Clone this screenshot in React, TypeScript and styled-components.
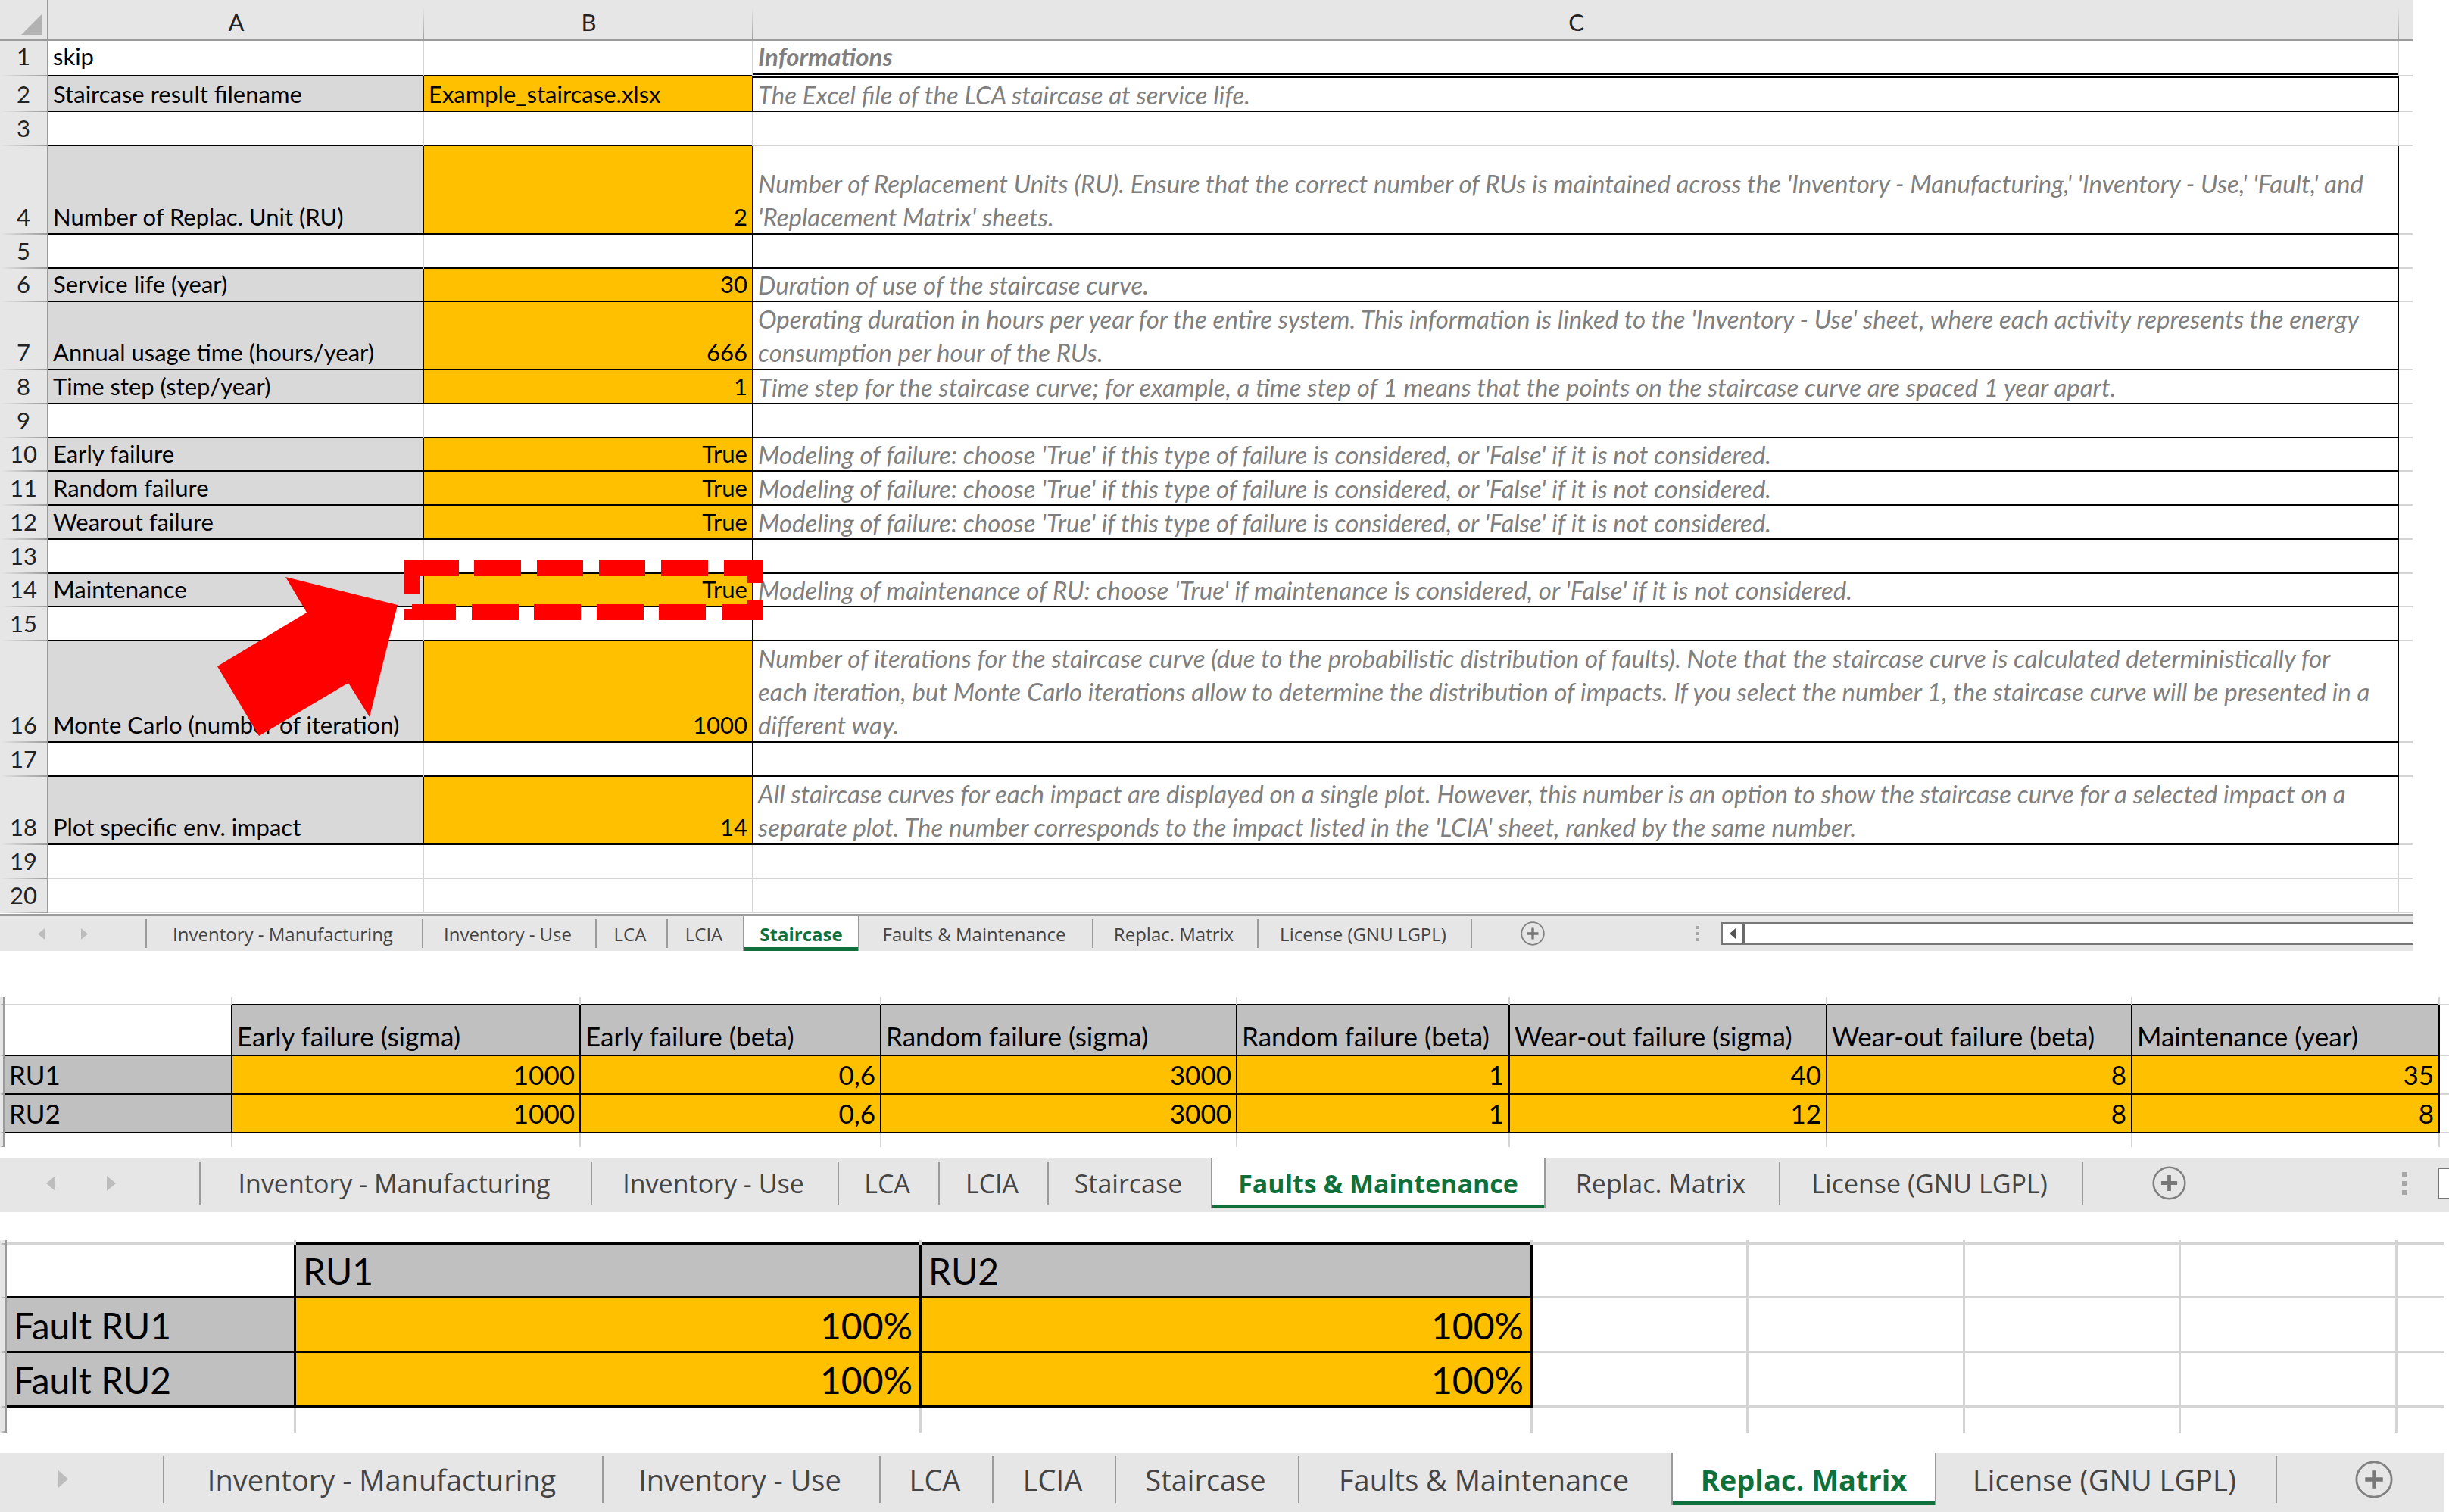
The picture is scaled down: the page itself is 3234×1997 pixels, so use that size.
import React from "react";
import styled, { createGlobalStyle } from "styled-components";

const ink = "#000000";
const gridline = "#d4d4d4";
const headLine = "#9b9b9b";
const chrome = "#e6e6e6";
const amber = "#ffc000";
const excelGreen = "#0f703b";

const GlobalStyle = createGlobalStyle`
  body {
    margin: 0;
    background: #ffffff;
    color: #000000;
    font-family: Lato, "Liberation Sans", sans-serif;
  }
  *, *::before, *::after { box-sizing: border-box; }
`;

const Page = styled.main`
  display: flex;
  flex-direction: column;
`;

const Sheet = styled.section<{ $top?: number; $right?: number }>`
  position: relative;
  margin-top: ${(p) => p.$top ?? 0}px;
  margin-right: ${(p) => p.$right ?? 0}px;
`;

const Table = styled.table<{ $font: number; $line: number; $pad: number; $foot?: number }>`
  width: 100%;
  table-layout: fixed;
  border-collapse: separate;
  border-spacing: 0;
  font-size: ${(p) => p.$font}px;
  line-height: ${(p) => p.$line}px;

  th,
  td {
    padding: 0 ${(p) => p.$pad}px ${(p) => p.$foot ?? 0}px;
  }
`;

const Col = styled.col<{ $w?: number }>`
  width: ${(p) => (p.$w ? `${p.$w}px` : "auto")};
`;

const Row = styled.tr<{ $h: number; $foot?: number }>`
  height: ${(p) => p.$h}px;

  ${(p) => p.$foot !== undefined && `&&& > * { padding-bottom: ${p.$foot}px; }`}
`;

type CellLook = {
  $fill?: string;
  $right?: string;
  $bottom?: string;
  $align?: string;
  $thick?: boolean;
};

const Cell = styled.td<CellLook>`
  vertical-align: bottom;
  white-space: nowrap;
  font-weight: 400;
  text-align: ${(p) => p.$align ?? "left"};
  background: ${(p) => p.$fill ?? "#ffffff"};
  border-right: ${(p) => (p.$thick ? 3 : 2)}px solid ${(p) => p.$right ?? gridline};
  box-shadow: inset 0 ${(p) => (p.$thick ? -3 : -2)}px ${(p) => p.$bottom ?? gridline};
`;

const NoteCell = styled(Cell)<{ $title?: boolean; $ruled?: boolean }>`
  color: #7f7f7f;
  font-size: 33px;
  font-style: italic;
  font-weight: ${(p) => (p.$title ? 700 : 400)};
  border-top: ${(p) => (p.$ruled ? `2px solid ${ink}` : "0")};
  ${(p) =>
    p.$title &&
    `box-shadow: inset 0 -2px #ffffff, inset 0 -4px ${ink};`}

  && {
    padding-bottom: 2px;
  }
`;

const Line = styled.span<{ $wrapped: boolean }>`
  display: block;
  line-height: ${(p) => (p.$wrapped ? 44 : 41)}px;
`;

const Stub = styled(Cell)`
  border-right: 0;
`;

const ColumnHead = styled.th`
  vertical-align: bottom;
  font-weight: 400;
  color: #222222;
  background:
    linear-gradient(${headLine}, ${headLine}) bottom / 100% 2px no-repeat,
    linear-gradient(${chrome} 18%, ${headLine}) right / 2px 100% no-repeat,
    ${chrome};
`;

const RowHead = styled.th`
  vertical-align: bottom;
  font-weight: 400;
  text-align: center;
  color: #222222;
  border-right: 2px solid ${headLine};
  background:
    linear-gradient(to right, ${chrome}, ${headLine}) bottom / 100% 2px no-repeat,
    ${chrome};

  && {
    padding-left: 0;
    padding-right: 0;
  }
`;

const EndHead = styled(ColumnHead)`
  background:
    linear-gradient(${headLine}, ${headLine}) bottom / 100% 2px no-repeat,
    ${chrome};
`;

const Corner = styled(RowHead)`
  text-align: right;
  background:
    linear-gradient(${headLine}, ${headLine}) bottom / 100% 2px no-repeat,
    ${chrome};

  svg {
    display: block;
    margin: 0 6px 4px auto;
  }
`;

const Markup = styled.svg`
  position: absolute;
  top: 740px;
  left: 287px;
`;

/* ---------- tab bar ---------- */

const Bar = styled.nav<{
  $h: number;
  $font: number;
  $top?: number;
  $right?: number;
  $foot?: number;
  $ruled?: boolean;
}>`
  display: flex;
  align-items: center;
  height: ${(p) => p.$h}px;
  margin-top: ${(p) => p.$top ?? 0}px;
  margin-right: ${(p) => p.$right ?? 0}px;
  padding-bottom: ${(p) => p.$foot ?? 0}px;
  overflow: hidden;
  background: ${chrome};
  border-top: ${(p) => (p.$ruled ? `3px solid ${headLine}` : "0")};
  font-family: "Open Sans", "Noto Sans", sans-serif;
  font-size: ${(p) => p.$font}px;
`;

const BareButton = styled.button`
  display: flex;
  align-items: center;
  justify-content: center;
  flex: none;
  margin: 0;
  padding: 0;
  border: 0;
  background: none;
  font: inherit;
  color: inherit;
  cursor: pointer;
`;

const Lead = styled.div<{ $w: number; $h: number; $pad: number; $gap: number }>`
  display: flex;
  align-items: center;
  flex: none;
  width: ${(p) => p.$w}px;
  height: ${(p) => p.$h}px;
  padding-left: ${(p) => p.$pad}px;
  gap: ${(p) => p.$gap}px;
  border-right: 2px solid ${headLine};
`;

const Tab = styled(BareButton)<{ $w: number; $h: number; $last?: boolean; $on?: boolean }>`
  width: ${(p) => p.$w}px;
  height: ${(p) => p.$h}px;
  padding-right: 4px;
  color: #444444;
  white-space: nowrap;
  border-right: ${(p) => (p.$last ? "0" : `2px solid ${headLine}`)};
  ${(p) =>
    p.$on &&
    `
    align-self: stretch;
    height: auto;
    padding-right: 0;
    color: ${excelGreen};
    font-weight: 700;
    background: #ffffff;
    border-left: 2px solid ${headLine};
    box-shadow: inset 0 -5px ${excelGreen};
  `}
`;

const AddButton = styled(BareButton)<{ $gap: number }>`
  margin-left: ${(p) => p.$gap}px;
`;

const Dots = styled.span<{ $size: number }>`
  display: flex;
  flex-direction: column;
  gap: ${(p) => p.$size}px;
  margin-left: auto;

  i {
    width: ${(p) => p.$size}px;
    height: ${(p) => p.$size}px;
    background: #a6a6a6;
  }
`;

const Scroll = styled.div<{ $w: string; $h: number; $gap: number }>`
  display: flex;
  flex: none;
  overflow: hidden;
  width: ${(p) => p.$w};
  height: ${(p) => p.$h}px;
  margin-left: ${(p) => p.$gap}px;
  background: #ffffff;
  border: 2px solid #777777;
  border-right: 0;
`;

const ScrollArrow = styled(BareButton)<{ $w: number }>`
  width: ${(p) => p.$w}px;
  border-right: 3px solid #6b6b6b;
`;

const Arrow = ({ dir, w, h, color = "#bdbdbd" }: { dir: "left" | "right"; w: number; h: number; color?: string }) => (
  <svg width={w} height={h} viewBox="0 0 10 16" preserveAspectRatio="none" aria-hidden="true">
    <path d={dir === "left" ? "M10 0V16L0 8Z" : "M0 0V16L10 8Z"} fill={color} />
  </svg>
);

const Plus = ({ size }: { size: number }) => (
  <svg width={size} height={size} viewBox="0 0 32 32" aria-hidden="true">
    <circle cx="16" cy="16" r="14.8" fill="none" stroke="#808080" strokeWidth="1.8" />
    <path d="M16 8.5V23.5M8.5 16H23.5" stroke="#777777" strokeWidth="3.4" />
  </svg>
);

const names = [
  "Inventory - Manufacturing",
  "Inventory - Use",
  "LCA",
  "LCIA",
  "Staircase",
  "Faults & Maintenance",
  "Replac. Matrix",
  "License (GNU LGPL)",
];

const Tabs = ({ widths, active, height }: { widths: number[]; active: number; height: number }) => (
  <>
    {names.map((name, i) => (
      <Tab
        key={name}
        type="button"
        $w={widths[i]}
        $h={height}
        $on={i === active}
        $last={i === active - 1}
        aria-current={i === active ? "page" : undefined}
      >
        {name}
      </Tab>
    ))}
  </>
);

/* ---------- staircase sheet ---------- */

type Setting = {
  h: number;
  label?: string;
  value?: string;
  left?: boolean;
  note?: string[];
};

const failureNote =
  "Modeling of failure: choose 'True' if this type of failure is considered, or 'False' if it is not considered.";

const settings: Setting[] = [
  { h: 47, label: "skip", note: ["Informations"] },
  {
    h: 47,
    label: "Staircase result filename",
    value: "Example_staircase.xlsx",
    left: true,
    note: ["The Excel file of the LCA staircase at service life."],
  },
  { h: 45 },
  {
    h: 117,
    label: "Number of Replac. Unit (RU)",
    value: "2",
    note: [
      "Number of Replacement Units (RU). Ensure that the correct number of RUs is maintained across the 'Inventory - Manufacturing,' 'Inventory - Use,' 'Fault,' and",
      "'Replacement Matrix' sheets.",
    ],
  },
  { h: 45 },
  { h: 44, label: "Service life (year)", value: "30", note: ["Duration of use of the staircase curve."] },
  {
    h: 90,
    label: "Annual usage time (hours/year)",
    value: "666",
    note: [
      "Operating duration in hours per year for the entire system. This information is linked to the 'Inventory - Use' sheet, where each activity represents the energy",
      "consumption per hour of the RUs.",
    ],
  },
  {
    h: 45,
    label: "Time step (step/year)",
    value: "1",
    note: [
      "Time step for the staircase curve; for example, a time step of 1 means that the points on the staircase curve are spaced 1 year apart.",
    ],
  },
  { h: 45 },
  { h: 44, label: "Early failure", value: "True", note: [failureNote] },
  { h: 45, label: "Random failure", value: "True", note: [failureNote] },
  { h: 45, label: "Wearout failure", value: "True", note: [failureNote] },
  { h: 45 },
  {
    h: 44,
    label: "Maintenance",
    value: "True",
    note: [
      "Modeling of maintenance of RU: choose 'True' if maintenance is considered, or 'False' if it is not considered.",
    ],
  },
  { h: 45 },
  {
    h: 134,
    label: "Monte Carlo (number of iteration)",
    value: "1000",
    note: [
      "Number of iterations for the staircase curve (due to the probabilistic distribution of faults). Note that the staircase curve is calculated deterministically for",
      "each iteration, but Monte Carlo iterations allow to determine the distribution of impacts. If you select the number 1, the staircase curve will be presented in a",
      "different way.",
    ],
  },
  { h: 45 },
  {
    h: 90,
    label: "Plot specific env. impact",
    value: "14",
    note: [
      "All staircase curves for each impact are displayed on a single plot. However, this number is an option to show the staircase curve for a selected impact on a",
      "separate plot. The number corresponds to the impact listed in the 'LCIA' sheet, ranked by the same number.",
    ],
  },
  { h: 45 },
  { h: 45 },
];

const StaircaseRow = ({ row, n }: { row: Setting; n: number }) => {
  const framed = n <= 18;
  const filled = row.value !== undefined;
  const boxed = n === 2 || (n >= 4 && n <= 18);
  const line = framed ? ink : gridline;
  return (
    <Row $h={row.h} $foot={n === 1 ? 6 : undefined}>
      <RowHead scope="row">{n}</RowHead>
      <Cell $fill={filled ? "#d9d9d9" : undefined} $right={filled ? ink : gridline} $bottom={line}>
        {row.label}
      </Cell>
      <Cell
        $fill={filled ? amber : undefined}
        $right={boxed ? ink : gridline}
        $bottom={line}
        $align={row.left ? "left" : "right"}
      >
        {row.value}
      </Cell>
      <NoteCell
        $title={n === 1}
        $ruled={n === 2}
        $right={boxed ? ink : gridline}
        $bottom={framed && n !== 3 ? ink : gridline}
      >
        {row.note?.map((text, _, all) => (
          <Line key={text} $wrapped={all.length > 1}>
            {text}
          </Line>
        ))}
      </NoteCell>
      <Stub />
    </Row>
  );
};

const StaircaseSheet = () => (
  <Sheet $right={48}>
    <Table $font={31} $line={41} $pad={6} $foot={3}>
      <colgroup>
        <Col $w={64} />
        <Col $w={496} />
        <Col $w={435} />
        <Col />
        <Col $w={18} />
      </colgroup>
      <thead>
        <Row $h={54} $foot={4}>
          <Corner aria-label="Select all">
            <svg width="28" height="28" viewBox="0 0 28 28" aria-hidden="true">
              <path d="M28 0V28H0Z" fill="#b2b2b2" />
            </svg>
          </Corner>
          <ColumnHead scope="col">A</ColumnHead>
          <ColumnHead scope="col">B</ColumnHead>
          <ColumnHead scope="col">C</ColumnHead>
          <EndHead />
        </Row>
      </thead>
      <tbody>
        {settings.map((row, i) => (
          <StaircaseRow key={i} row={row} n={i + 1} />
        ))}
      </tbody>
    </Table>
    <Markup width="722" height="233" viewBox="287 740 722 233" aria-hidden="true">
      <g fill="#ff0000">
        <path d="M377 762L525 799L488 947L460 902L342 972L287 880L405 809Z" />
        <path d="M533 740H606V761H554V784H533Z" />
        <path d="M626 740h62v21h-62zM709 740h61v21h-61zM791 740h61v21h-61zM873 740h62v21h-62z" />
        <path d="M956 740H1008V770H987V761H956Z" />
        <path d="M533 805H544V798H602V819H533Z" />
        <path d="M623 798h62v21h-62zM705 798h62v21h-62zM788 798h62v21h-62zM870 798h62v21h-62z" />
        <path d="M953 798H987V792H1008V819H953Z" />
      </g>
    </Markup>
  </Sheet>
);

/* ---------- faults sheet ---------- */

const faultHeads = [
  "Early failure (sigma)",
  "Early failure (beta)",
  "Random failure (sigma)",
  "Random failure (beta)",
  "Wear-out failure (sigma)",
  "Wear-out failure (beta)",
  "Maintenance (year)",
];
const faultRows = [
  ["RU1", "1000", "0,6", "3000", "1", "40", "8", "35"],
  ["RU2", "1000", "0,6", "3000", "1", "12", "8", "8"],
];

const silver = "#c0c0c0";

const FaultsSheet = () => (
  <Sheet $top={61}>
    <Table $font={35} $line={47} $pad={6} $foot={3}>
      <colgroup>
        <Col $w={6} />
        <Col $w={301} />
        <Col $w={460} />
        <Col $w={397} />
        <Col $w={470} />
        <Col $w={360} />
        <Col $w={419} />
        <Col $w={403} />
        <Col />
        <Col $w={12} />
      </colgroup>
      <tbody>
        <Row $h={11}>
          <RowHead />
          <Cell />
          {faultHeads.map((h) => (
            <Cell key={h} $bottom={ink} />
          ))}
          <Stub />
        </Row>
        <Row $h={67}>
          <RowHead />
          <Cell $right={ink} $bottom={ink} />
          {faultHeads.map((h) => (
            <Cell as="th" scope="col" key={h} $fill={silver} $right={ink} $bottom={ink}>
              {h}
            </Cell>
          ))}
          <Stub />
        </Row>
        {faultRows.map(([name, ...values]) => (
          <Row key={name} $h={51}>
            <RowHead />
            <Cell as="th" scope="row" $fill={silver} $right={ink} $bottom={ink}>
              {name}
            </Cell>
            {values.map((v, i) => (
              <Cell key={i} $fill={amber} $right={ink} $bottom={ink} $align="right">
                {v}
              </Cell>
            ))}
            <Stub />
          </Row>
        ))}
        <Row $h={18}>
          <RowHead />
          <Cell $bottom="#ffffff" />
          {faultHeads.map((h) => (
            <Cell key={h} $bottom="#ffffff" />
          ))}
          <Stub $bottom="#ffffff" />
        </Row>
      </tbody>
    </Table>
  </Sheet>
);

/* ---------- replacement matrix sheet ---------- */

const units = ["RU1", "RU2"];

const Blanks = ({ bottom }: { bottom?: string }) => (
  <>
    {[0, 1, 2, 3].map((i) => (
      <Cell key={i} $thick $bottom={bottom} />
    ))}
    <Stub $thick $bottom={bottom} />
  </>
);

const MatrixSheet = () => (
  <Sheet $top={37} $right={6}>
    <Table $font={48} $line={66} $pad={9} $foot={3}>
      <colgroup>
        <Col $w={9} />
        <Col $w={382} />
        <Col $w={826} />
        <Col $w={807} />
        <Col $w={285} />
        <Col $w={286} />
        <Col $w={285} />
        <Col $w={286} />
        <Col />
      </colgroup>
      <tbody>
        <Row $h={6}>
          <RowHead />
          <Cell $thick />
          {units.map((u) => (
            <Cell key={u} $thick $bottom={ink} />
          ))}
          <Blanks />
        </Row>
        <Row $h={71}>
          <RowHead />
          <Cell $thick $right={ink} $bottom={ink} />
          {units.map((u) => (
            <Cell as="th" scope="col" key={u} $thick $fill={silver} $right={ink} $bottom={ink}>
              {u}
            </Cell>
          ))}
          <Blanks />
        </Row>
        {units.map((u) => (
          <Row key={u} $h={72}>
            <RowHead />
            <Cell as="th" scope="row" $thick $fill={silver} $right={ink} $bottom={ink}>
              Fault {u}
            </Cell>
            {units.map((t) => (
              <Cell key={t} $thick $fill={amber} $right={ink} $bottom={ink} $align="right">
                100%
              </Cell>
            ))}
            <Blanks />
          </Row>
        ))}
        <Row $h={33}>
          <RowHead />
          <Cell $thick $bottom="#ffffff" />
          {units.map((u) => (
            <Cell key={u} $thick $bottom="#ffffff" />
          ))}
          <Blanks bottom="#ffffff" />
        </Row>
      </tbody>
    </Table>
  </Sheet>
);

export default function App() {
  return (
    <Page>
      <GlobalStyle />

      <StaircaseSheet />
      <Bar $h={49} $font={24} $top={1} $right={48} $ruled aria-label="Staircase workbook sheets">
        <Lead $w={194} $h={38} $pad={50} $gap={48}>
          <BareButton type="button" aria-label="Previous sheet">
            <Arrow dir="left" w={9} h={15} />
          </BareButton>
          <BareButton type="button" aria-label="Next sheet">
            <Arrow dir="right" w={9} h={15} />
          </BareButton>
        </Lead>
        <Tabs widths={[365, 229, 94, 99, 154, 309, 218, 282]} active={4} height={38} />
        <AddButton type="button" aria-label="New sheet" $gap={64}>
          <Plus size={32} />
        </AddButton>
        <Dots $size={4}>
          <i />
          <i />
          <i />
        </Dots>
        <Scroll $w="913px" $h={30} $gap={29}>
          <ScrollArrow type="button" aria-label="Scroll left" $w={29}>
            <Arrow dir="left" w={8} h={14} color="#555555" />
          </ScrollArrow>
        </Scroll>
      </Bar>

      <FaultsSheet />
      <Bar $h={72} $font={34} $top={14} $foot={5} aria-label="Faults workbook sheets">
        <Lead $w={265} $h={56} $pad={61} $gap={68}>
          <BareButton type="button" aria-label="Previous sheet">
            <Arrow dir="left" w={12} h={20} />
          </BareButton>
          <BareButton type="button" aria-label="Next sheet">
            <Arrow dir="right" w={12} h={20} />
          </BareButton>
        </Lead>
        <Tabs widths={[517, 326, 133, 144, 214, 442, 310, 400]} active={5} height={56} />
        <AddButton type="button" aria-label="New sheet" $gap={91}>
          <Plus size={45} />
        </AddButton>
        <Dots $size={6}>
          <i />
          <i />
          <i />
        </Dots>
        <Scroll $w="15px" $h={42} $gap={41}>
          <ScrollArrow type="button" aria-label="Scroll left" $w={40}>
            <Arrow dir="left" w={11} h={19} color="#555555" />
          </ScrollArrow>
        </Scroll>
      </Bar>

      <MatrixSheet />
      <Bar $h={78} $font={38} $top={27} $right={6} $foot={9} aria-label="Matrix workbook sheets">
        <Lead $w={217} $h={62} $pad={77} $gap={0}>
          <BareButton type="button" aria-label="Next sheet">
            <Arrow dir="right" w={13} h={23} />
          </BareButton>
        </Lead>
        <Tabs widths={[580, 366, 149, 162, 242, 491, 350, 450]} active={6} height={62} />
        <AddButton type="button" aria-label="New sheet" $gap={103}>
          <Plus size={50} />
        </AddButton>
      </Bar>
    </Page>
  );
}
